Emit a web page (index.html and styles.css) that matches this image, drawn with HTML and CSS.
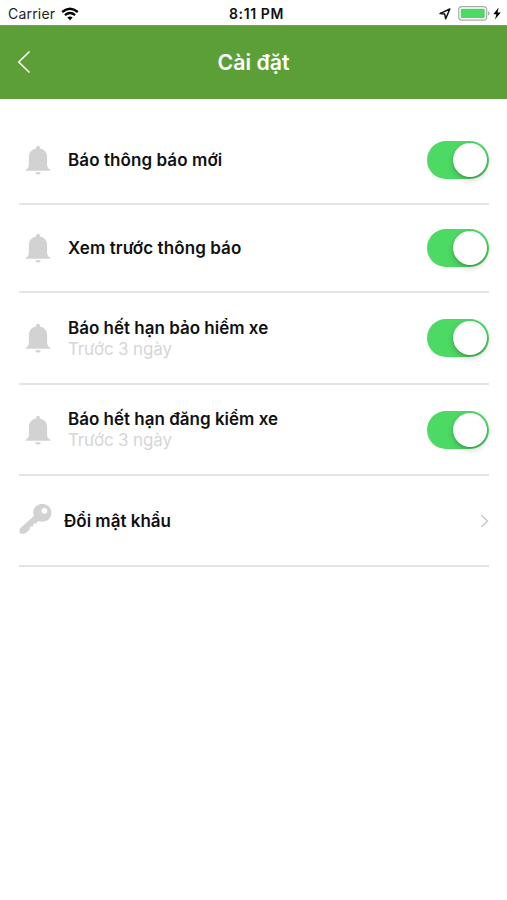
FILE: index.html
```html
<!DOCTYPE html>
<html lang="vi">
<head>
<meta charset="utf-8">
<title>Cài đặt</title>
<link rel="stylesheet" href="styles.css">
</head>
<body>
<svg class="defs" width="0" height="0">
  <symbol id="bell" viewBox="0 0 26 30">
    <path d="M13 0.8C14.2 0.8 14.9 1.6 14.9 2.7V3.4C19.6 4.3 22.1 7.7 22.1 12V19.5C22.1 22.1 23.2 23.6 25.3 24.9V25.7H0.7V24.9C2.8 23.6 3.9 22.1 3.9 19.5V12C3.9 7.7 6.4 4.3 11.1 3.4V2.7C11.1 1.6 11.8 0.8 13 0.8Z"/>
    <path d="M10.2 27.2H15.8C15.5 28.8 14.5 29.6 13 29.6S10.5 28.8 10.2 27.2Z"/>
  </symbol>
</svg>
<div class="status">
  <div class="left"><span class="carrier">Carrier</span>
    <svg width="18" height="14" viewBox="0 0 18 14" fill="none" stroke="#000" stroke-width="2.3"><path d="M1.2 5Q9-1.6 16.8 5M3.9 8.1Q9 4 14.1 8.1"/><path d="M6.3 10.5Q9 8.3 11.7 10.5L9 13.2Z" fill="#000" stroke="none"/></svg>
  </div>
  <span class="time">8:11 PM</span>
  <div class="right">
    <svg class="loc" width="12" height="12" viewBox="0 0 12 12" fill="none" stroke="#111" stroke-width="1.5" stroke-linejoin="round"><path d="M10.8 1L1 5.6L5.7 6.1L6.7 10.8Z"/></svg>
    <svg class="battery" width="32" height="15" viewBox="0 0 32 15"><rect x=".7" y=".7" width="28" height="13.4" rx="3.2" fill="#fff" stroke="#aaa" stroke-width="1.2"/><rect x="2.7" y="2.7" width="24" height="9.4" rx="1.3" fill="#4cd964"/><path d="M30 5.2Q31.6 5.8 31.6 7.4T30 9.6Z" fill="#aaa"/></svg>
    <svg width="8" height="13" viewBox="0 0 8 13"><path d="M5.7.5L.3 7.2H3.4L2 12.5L7.7 5.5H4.5Z" fill="#000"/></svg>
  </div>
</div>
<header class="nav">
  <svg class="back" width="14" height="24" viewBox="0 0 14 24" fill="none" stroke="#fff" stroke-width="1.6"><path d="M12.5 1.5L1.8 12L12.5 22.5"/></svg>
  <h1>Cài đặt</h1>
</header>
<main>
  <div class="row">
    <svg class="bell"><use href="#bell"/></svg>
    <div class="label"><div class="name wide">Báo thông báo mới</div></div>
    <div class="switch"><div class="knob"></div></div>
  </div>
  <div class="row">
    <svg class="bell"><use href="#bell"/></svg>
    <div class="label"><div class="name wide">Xem trước thông báo</div></div>
    <div class="switch"><div class="knob"></div></div>
  </div>
  <div class="row tall">
    <svg class="bell"><use href="#bell"/></svg>
    <div class="label low"><div class="name">Báo hết hạn bảo hiểm xe</div><div class="sub">Trước 3 ngày</div></div>
    <div class="switch"><div class="knob"></div></div>
  </div>
  <div class="row last">
    <svg class="bell"><use href="#bell"/></svg>
    <div class="label"><div class="name">Báo hết hạn đăng kiểm xe</div><div class="sub">Trước 3 ngày</div></div>
    <div class="switch"><div class="knob"></div></div>
  </div>
  <div class="row last">
    <svg class="key" width="33" height="32" viewBox="0 0 33 32"><path fill-rule="evenodd" d="M23.2 1C28.6 1 32.4 4.6 32.4 9.8S28.6 18.8 23.2 18.8C21.7 18.8 20.6 18.6 19.3 18L17 20.4L14.2 20.8L13.9 23.4L11 23.8L10.6 26.6L7 30Q6.3 30.7 5.3 30.7H1.7Q.6 30.7.6 29.6V26.7Q.6 25.9 1.2 25.3L15 12.9C14.4 11.9 14.2 10.9 14.2 9.7C14.2 4.6 18 1 23.2 1ZM25.4 4.9A2.9 2.9 0 1 0 25.4 10.7A2.9 2.9 0 1 0 25.4 4.9Z"/></svg>
    <div class="label low"><div class="name">Đổi mật khẩu</div></div>
    <svg class="chev" width="9" height="14" viewBox="0 0 9 14" fill="none" stroke="#c9c9c9" stroke-width="1.5"><path d="M1.2 1L7.5 7L1.2 13"/></svg>
  </div>
</main>
</body>
</html>
```
FILE: styles.css
```css
* { box-sizing: border-box; }
body { margin: 0; background: #fff; color: #111; font-family: Inter, "Liberation Sans", sans-serif; }
svg { display: block; flex: none; }
.defs { position: absolute; }
.status { display: grid; grid-template-columns: 1fr auto 1fr; align-items: center; height: 25px; padding: 2px 5px 0 8px; }
.left, .right { display: flex; align-items: center; }
.left { gap: 6px; }
.right { justify-content: flex-end; margin-right: 1px; }
.carrier { font-size: 14px; line-height: 18px; color: #222; letter-spacing: .2px; }
.time { font-size: 14px; font-weight: 600; line-height: 18px; letter-spacing: .6px; margin-left: 3px; }
.loc { margin-right: 7px; }
.battery { margin-right: 3px; }
.nav { display: grid; grid-template-columns: 40px 1fr 40px; align-items: center; height: 73.5px; background: #5c9f37; border-top: 1px solid #6eaa4d; }
.back { margin-left: 17px; }
.nav h1 { margin: 0; color: #fff; font-size: 21.3px; font-weight: 600; line-height: 28px; text-align: center; }
main { padding: 18.5px 18px 0 19px; }
.row { display: flex; align-items: center; height: 88px; border-bottom: 2px solid #e4e4e4; }
.tall { height: 92px; }
.last { height: 91px; }
.bell { width: 26px; height: 30px; margin: 0 17.5px 0 5.5px; fill: #d2d2d2; }
.key { margin: -4px 12px 0 0; fill: #d2d2d2; }
.label { flex: 1; white-space: nowrap; }
.low { padding-top: 2px; }
.name { font-size: 17px; font-weight: 600; line-height: 21px; }
.wide { letter-spacing: .08px; }
.sub { font-size: 17px; line-height: 21px; color: #d6d6d6; letter-spacing: -.15px; }
.switch { width: 62px; height: 38px; padding: 2px; border-radius: 19px; background: #4cd964; display: flex; justify-content: flex-end; }
.knob { width: 34px; height: 34px; border-radius: 50%; background: #fff; box-shadow: 0 3px 6px rgba(0,0,0,.18), 0 1px 2px rgba(0,0,0,.2); }
```
